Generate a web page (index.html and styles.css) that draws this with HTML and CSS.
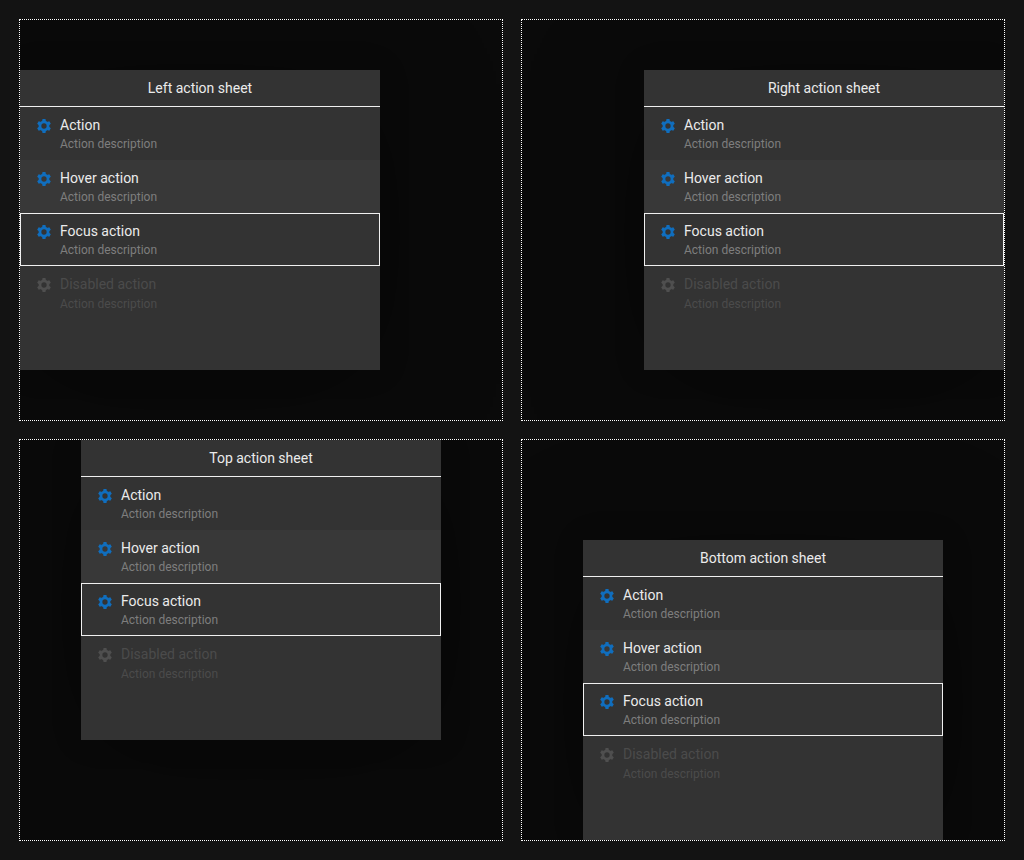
FILE: index.html
```
<!DOCTYPE html>
<html lang="en">
<head>
<meta charset="utf-8">
<title>Action sheets</title>
<link rel="stylesheet" href="styles.css">
</head>
<body>
<svg width="0" height="0" class="defs">
  <symbol id="gear" viewBox="-7 -7 14 14">
    <path fill-rule="evenodd" d="M-5.4 0a5.4 5.4 0 1 0 10.8 0a5.4 5.4 0 1 0-10.8 0zM-2.65 0a2.65 2.65 0 1 0 5.3 0a2.65 2.65 0 1 0-5.3 0z"/>
    <path id="teeth" d="M-1.5-7h3l.4 2.5h-3.8zM-1.5 7h3l.4-2.5h-3.8z"/>
    <use href="#teeth" transform="rotate(60)"/>
    <use href="#teeth" transform="rotate(120)"/>
  </symbol>
</svg>
<main class="grid">
  <section class="stage left"></section>
  <section class="stage right"></section>
  <section class="stage top"></section>
  <section class="stage bottom"></section>
</main>
<template id="sheet">
  <div class="sheet">
    <header class="title"></header>
    <div class="item"><svg class="icon"><use href="#gear"/></svg><div class="text"><div class="name">Action</div><div class="desc">Action description</div></div></div>
    <div class="item hover"><svg class="icon"><use href="#gear"/></svg><div class="text"><div class="name">Hover action</div><div class="desc">Action description</div></div></div>
    <div class="item focus"><svg class="icon"><use href="#gear"/></svg><div class="text"><div class="name">Focus action</div><div class="desc">Action description</div></div></div>
    <div class="item disabled"><svg class="icon"><use href="#gear"/></svg><div class="text"><div class="name">Disabled action</div><div class="desc">Action description</div></div></div>
  </div>
</template>
<script src="script.js"></script>
</body>
</html>
```
FILE: styles.css
```
* { box-sizing: border-box; }
body {
  margin: 0;
  background: #131313;
  color: #ebebeb;
  font-family: Roboto, sans-serif;
  font-size: 14px;
}
.defs { display: block; }
.grid {
  display: grid;
  grid-template-columns: 484px 484px;
  grid-auto-rows: 402px;
  gap: 18px;
  padding: 19px;
}
.stage {
  display: flex;
  align-items: center;
  justify-content: center;
  border: 1px dotted #fff;
  background: #0a0a0a;
  overflow: hidden;
}
.left { justify-content: flex-start; }
.right { justify-content: flex-end; }
.top { align-items: flex-start; }
.bottom { align-items: flex-end; }
.sheet {
  width: 360px;
  height: 300px;
  background: #333;
  box-shadow: 0 14px 125px rgba(0, 0, 0, .3), 0 0 30px rgba(0, 0, 0, .13);
}
.title {
  height: 37px;
  border-bottom: 1px solid #f0f0f0;
  line-height: 36px;
  text-align: center;
}
.item {
  display: flex;
  height: 53px;
  padding: 9px 16px 0;
  border: 1px solid transparent;
}
.hover { background: #383838; }
.focus { border-color: #f0f0f0; }
.icon {
  width: 14px;
  height: 14px;
  margin: 2px 9px 0 0;
  fill: #106ebe;
}
.name { line-height: 16px; }
.desc {
  margin-top: 4px;
  font-size: 12px;
  line-height: 14px;
  color: #7e7e7e;
}
.disabled, .disabled .desc { color: #4b4b4b; }
.disabled .desc { margin-top: 5px; }
.disabled .icon { fill: #4f4f4f; }
```
FILE: script.js
```
const titles = {
  left: 'Left action sheet',
  right: 'Right action sheet',
  top: 'Top action sheet',
  bottom: 'Bottom action sheet',
};
const template = document.getElementById('sheet');
for (const [side, title] of Object.entries(titles)) {
  const sheet = template.content.cloneNode(true);
  sheet.querySelector('.title').textContent = title;
  document.querySelector('.' + side).append(sheet);
}
```
